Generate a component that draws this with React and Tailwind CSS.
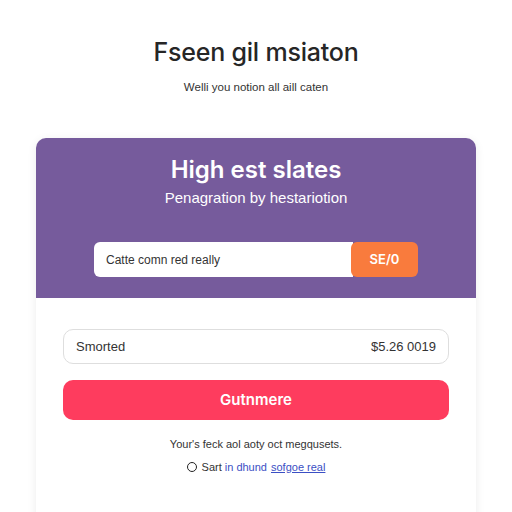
export default function App() {
  return (
    <div className="w-[512px] h-[512px] overflow-hidden bg-white flex flex-col items-center" style={{ fontFamily: '"Inter", "Liberation Sans", sans-serif' }}>
      <h1 className="mt-[36px] text-[25px] leading-[32px] font-medium text-[#262626] tracking-[-0.2px]">Fseen gil msiaton</h1>
      <p className="mt-[12px] text-[11.5px] leading-[14px] text-[#333]" style={{ fontFamily: '"Liberation Sans", Arial, sans-serif' }}>Welli you notion all aill caten</p>
      <div className="mt-[44px] w-[440px] h-[400px] shrink-0 rounded-[10px] bg-white shadow-[0_2px_10px_rgba(0,0,0,0.08)] overflow-hidden flex flex-col">
        <div className="h-[160px] bg-[#765b9c] flex flex-col items-center">
          <h2 className="mt-[17px] text-[24px] leading-[30px] font-semibold text-white">High est slates</h2>
          <p className="mt-[4px] text-[15px] leading-[18px] text-white" style={{ fontFamily: '"Liberation Sans", Arial, sans-serif' }}>Penagration by hestariotion</p>
          <div className="mt-[35px] flex">
            <div className="w-[259px] h-[35px] bg-white rounded-l-[6px] flex items-center pl-[12px] text-[12px] text-[#333]" style={{ fontFamily: '"Liberation Sans", Arial, sans-serif' }}>Catte comn red really</div>
            <div className="w-[67px] h-[35px] bg-[#f97b3d] rounded-[6px] -ml-[2px] flex items-center justify-center text-[13px] font-semibold text-white">SE/0</div>
          </div>
        </div>
        <div className="flex flex-col items-center px-[27px]" style={{ fontFamily: '"Liberation Sans", Arial, sans-serif' }}>
          <div className="mt-[31px] w-full h-[35px] rounded-[10px] border border-[#dedede] flex items-center justify-between px-[12px] text-[13px] text-[#333]">
            <span>Smorted</span>
            <span>$5.26 0019</span>
          </div>
          <div className="mt-[16px] w-full h-[40px] rounded-[10px] bg-[#fe3c5e] flex items-center justify-center text-[15px] font-semibold text-white" style={{ fontFamily: '"Inter", sans-serif' }}>Gutnmere</div>
          <p className="mt-[17px] text-[11px] leading-[14px] text-[#333]">Your's feck aol aoty oct megqusets.</p>
          <div className="mt-[9px] flex items-center text-[11px] leading-[14px]">
            <span className="w-[10px] h-[10px] rounded-full border-[1.5px] border-[#222] mr-[5px]"></span>
            <span className="text-[#333]">Sart</span>
            <span className="ml-[3px] text-[#3b4fc4]">in dhund</span>
            <span className="ml-[4px] text-[#3b4fc4] underline">sofgoe real</span>
          </div>
        </div>
      </div>
    </div>
  );
}
